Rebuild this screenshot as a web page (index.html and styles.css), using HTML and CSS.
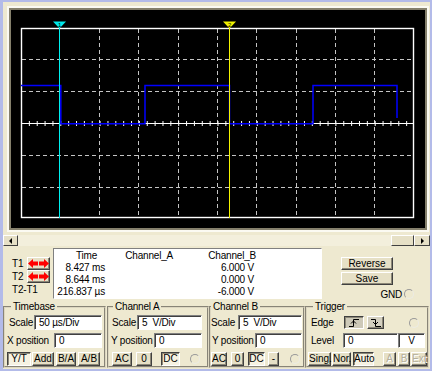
FILE: index.html
```html
<!DOCTYPE html>
<html lang="en">
<head>
  <meta charset="UTF-8">
  <title>Oscilloscope</title>
  <link rel="stylesheet" href="styles.css">
</head>
<body>

<div class="scope">
  <div class="screen">
    <div class="crt">
      <svg width="414" height="218" viewBox="11 10 414 218">
        <g stroke="#c4c4c4" stroke-width="1" stroke-dasharray="4 3">
          <path d="M99.5 29V218M138.5 29V218M178.5 29V218M217.5 29V218M256.5 29V218M296.5 29V218M335.5 29V218M374.5 29V218"/>
          <path d="M22 59.5H414M22 91.5H414M22 155.5H414M22 187.5H414"/>
        </g>
        <path d="M21 123.5H414" stroke="#fff"/>
        <path d="M21 123.5H414" stroke="#fff" stroke-width="5" stroke-dasharray="1 6.86"/>
        <rect x="21.5" y="28.5" width="392" height="189" fill="none" stroke="#fff" stroke-width="1.4"/>
        <polyline points="21,85.5 60.8,85.5 60.8,123.8 145,123.8 145,85.5 229.5,85.5 229.5,123.8 313,123.8 313,85.5 397,85.5 397,118" fill="none" stroke="#0000ff" stroke-width="1.5"/>
        <path d="M59.5 28V218" stroke="#00f0f0"/>
        <polygon points="53,21.5 66,21.5 59.5,28.5" fill="#00e8e8"/>
        <text x="59.5" y="26.6" font-size="6" text-anchor="middle" fill="#000">1</text>
        <path d="M229.5 28V218" stroke="#f4f400"/>
        <polygon points="223,21.5 236,21.5 229.5,28.5" fill="#f0f000"/>
        <text x="229.5" y="26.6" font-size="6" text-anchor="middle" fill="#000">2</text>
      </svg>
    </div>
  </div>

  <div class="scrollbar">
    <div class="sb-btn"><span class="tri-left"></span></div>
    <div class="sb-track"><div class="sb-thumb"></div></div>
    <div class="sb-btn sb-right"><span class="tri-right"></span></div>
  </div>

  <div class="readout">
    <div class="cursors">
      <div class="crow">
        <span class="clabel">T1</span>
        <button class="btn arrows"><svg width="21" height="9" viewBox="0 0 21 9"><polygon points="0,4.5 5,0 5,2.5 10,2.5 10,6.5 5,6.5 5,9" fill="#f00"/><polygon points="21,4.5 16,0 16,2.5 11,2.5 11,6.5 16,6.5 16,9" fill="#f00"/></svg></button>
      </div>
      <div class="crow">
        <span class="clabel">T2</span>
        <button class="btn arrows"><svg width="21" height="9" viewBox="0 0 21 9"><polygon points="0,4.5 5,0 5,2.5 10,2.5 10,6.5 5,6.5 5,9" fill="#f00"/><polygon points="21,4.5 16,0 16,2.5 11,2.5 11,6.5 16,6.5 16,9" fill="#f00"/></svg></button>
      </div>
      <div class="crow">
        <span class="clabel">T2-T1</span>
      </div>
    </div>

    <div class="table">
      <div class="c h1">Time</div>
      <div class="c h2">Channel_A</div>
      <div class="c h3">Channel_B</div>

      <div class="c t">8.427 ms</div>
      <div class="c"></div>
      <div class="c b">6.000 V</div>

      <div class="c t">8.644 ms</div>
      <div class="c"></div>
      <div class="c b">0.000 V</div>

      <div class="c t">216.837 µs</div>
      <div class="c"></div>
      <div class="c b">-6.000 V</div>
    </div>

    <div class="side">
      <button class="btn side-btn">Reverse</button>
      <button class="btn side-btn save">Save</button>
      <div class="gnd">GND <span class="radio"></span></div>
    </div>
  </div>

  <div class="controls">
    <fieldset class="group timebase">
      <legend>Timebase</legend>
      <div class="row">
        <span class="lbl indent">Scale</span>
        <div class="field w68">50 µs/Div</div>
      </div>
      <div class="row">
        <span class="lbl">X position</span>
        <div class="field w48">0</div>
      </div>
      <div class="row">
        <button class="btn on w24">Y/T</button>
        <button class="btn w22 ml1">Add</button>
        <button class="btn w20 ml2">B/A</button>
        <button class="btn w22 ml2">A/B</button>
      </div>
    </fieldset>

    <fieldset class="group cha">
      <legend>Channel A</legend>
      <div class="row">
        <span class="lbl indent1">Scale</span>
        <div class="field w65">5&nbsp;&nbsp;V/Div</div>
      </div>
      <div class="row">
        <span class="lbl">Y position</span>
        <div class="field w48">0</div>
      </div>
      <div class="row">
        <button class="btn w20 ml1">AC</button>
        <button class="btn w16 ml4">0</button>
        <button class="btn on w19 ml9">DC</button>
        <span class="radio ml10"></span>
      </div>
    </fieldset>

    <fieldset class="group chb">
      <legend>Channel B</legend>
      <div class="row">
        <span class="lbl">Scale</span>
        <div class="field w64">5&nbsp;&nbsp;V/Div</div>
      </div>
      <div class="row">
        <span class="lbl indent1">Y position</span>
        <div class="field w47">0</div>
      </div>
      <div class="row">
        <button class="btn w16">AC</button>
        <button class="btn w13 ml4">0</button>
        <button class="btn on w17 ml4">DC</button>
        <button class="btn w11 ml3">-</button>
        <span class="radio ml11"></span>
      </div>
    </fieldset>

    <fieldset class="group trig">
      <legend>Trigger</legend>
      <div class="row">
        <span class="tlbl">Edge</span>
        <button class="btn edge on w20"><svg width="12" height="9" viewBox="0 0 12 9"><path d="M1 8.5H5.5V1.5H11M3 5.5L5.5 3L8 5.5" fill="none" stroke="#000"/></svg></button>
        <button class="btn edge w17 ml3"><svg width="12" height="9" viewBox="0 0 12 9"><path d="M1 1.5H5.5V8.5H11M3 4L5.5 6.5L8 4" fill="none" stroke="#000"/></svg></button>
        <span class="radio trig-radio"></span>
      </div>
      <div class="row">
        <span class="tlbl">Level</span>
        <div class="field w55">0</div>
        <div class="field unit">V</div>
      </div>
      <div class="row">
        <button class="btn w23">Sing.</button>
        <button class="btn w19 ml1">Nor.</button>
        <button class="btn on w21 ml2">Auto</button>
        <button class="btn off w13 ml9">A</button>
        <button class="btn off w12 ml2">B</button>
        <button class="btn off w16 ml1">Ext</button>
      </div>
    </fieldset>
  </div>
</div>

</body>
</html>
```

FILE: styles.css
```css
* {
  box-sizing: border-box;
}

body {
  margin: 0;
  background: #eee9d0;
  font-family: "Liberation Sans", Arial, sans-serif;
  font-size: 10px;
  letter-spacing: -0.2px;
  color: #000;
}

.scope {
  width: 432px;
  height: 371px;
  border: 2px solid #b3bbe9;
  border-left-width: 3px;
  background: #eee9d0;
  display: flex;
  flex-direction: column;
  overflow: hidden;
}

/* scope screen */
.screen {
  margin: 4px 0 0 4px;
  width: 422px;
  height: 226px;
  border: 2px solid #fbfaf2;
}

.crt {
  height: 100%;
  border: 2px solid #85806c;
  background: #000;
}

.crt svg {
  display: block;
  font-family: "Liberation Sans", Arial, sans-serif;
}

/* scrollbar */
.scrollbar {
  display: flex;
  height: 11px;
  margin-top: 3px;
}

.sb-btn {
  width: 15px;
  border: 1px solid;
  border-color: #fff #404040 #404040 #fff;
  background: #e6e0c6;
  display: flex;
  align-items: center;
  justify-content: center;
}

.sb-right {
  width: 16px;
}

.tri-left {
  border-right: 3px solid #000;
  border-top: 3px solid transparent;
  border-bottom: 3px solid transparent;
}

.tri-right {
  border-left: 3px solid #000;
  border-top: 3px solid transparent;
  border-bottom: 3px solid transparent;
}

.sb-track {
  flex: 1;
  display: flex;
  justify-content: flex-end;
  background: #f3efdc;
}

.sb-thumb {
  width: 23px;
  border: 1px solid;
  border-color: #fff #404040 #404040 #fff;
  background: #e6e0c6;
}

/* buttons */
.btn {
  height: 14px;
  padding: 0;
  border: 1px solid;
  border-color: #fff #404040 #404040 #fff;
  box-shadow: inset -1px -1px 0 #8c8878;
  background: #e6e0c6;
  font: inherit;
  color: #000;
  line-height: 11px;
  text-align: center;
  white-space: nowrap;
}

.btn.on {
  border-color: #404040 #fff #fff #404040;
  box-shadow: inset 1px 1px 0 #8c8878;
  background: #f6f2e2;
}

.btn.off {
  color: #b4af9c;
  text-shadow: 1px 1px 0 #fff;
}

/* readout */
.readout {
  display: flex;
  height: 52px;
  margin-top: 2px;
}

.cursors {
  width: 50px;
  padding: 9px 0 0 9px;
}

.crow {
  display: flex;
  align-items: center;
  height: 13px;
}

.clabel {
  width: 15px;
  white-space: nowrap;
}

.arrows {
  width: 23px;
  height: 13px;
  display: flex;
  align-items: center;
  justify-content: center;
}

.arrows svg {
  display: block;
}

.table {
  width: 269px;
  height: 51px;
  padding-top: 1px;
  background: #fff;
  border: 1px solid;
  border-color: #808080 #fff #fff #808080;
  display: grid;
  grid-template-columns: 52px 75px 78px;
  grid-auto-rows: 12px;
  line-height: 12px;
}

.c {
  text-align: right;
  white-space: nowrap;
}

.h1 { padding-right: 9px; }
.h2 { padding-right: 8px; }
.h3 { padding-right: 3px; }
.t { padding-right: 1px; }
.b { padding-right: 5px; }

.side {
  width: 89px;
  margin-left: 19px;
  padding-top: 9px;
  display: flex;
  flex-direction: column;
}

.side-btn {
  width: 52px;
  height: 13px;
}

.save {
  margin-top: 2px;
}

.gnd {
  display: flex;
  align-items: center;
  justify-content: flex-end;
  gap: 2px;
  height: 12px;
  margin-top: 3px;
  padding-right: 16px;
}

.radio {
  width: 10px;
  height: 10px;
  border-radius: 50%;
  border: 1px solid;
  border-color: #9a9a9a #ecebe4 #ecebe4 #9a9a9a;
  flex-shrink: 0;
}

/* control groups */
.controls {
  display: flex;
  height: 67px;
  margin-top: 1px;
}

.group {
  margin: 0;
  padding: 0 2px;
  min-width: 0;
  border: 2px groove #dcd6c0;
}

.group legend {
  padding: 0 2px;
  line-height: 12px;
}

.timebase { width: 103px; margin-right: 1px; }
.timebase legend { margin-left: 4px; }

.cha { width: 102px; padding: 0 5px 0 2px; }
.cha legend { margin-left: 2px; }

.chb { width: 96px; padding: 0 1px 0 0; }
.chb legend { margin-left: 0; }

.trig { width: 124px; padding: 0 0 0 1px; }
.trig legend { margin-left: 5px; }

.row {
  display: flex;
  align-items: center;
  height: 15px;
  margin-top: 2px;
}

.row + .row {
  margin-top: 3px;
}

.lbl {
  flex: 1;
  white-space: nowrap;
}

.indent { padding-left: 2px; }
.indent1 { padding-left: 1px; }

.tlbl {
  width: 35px;
  padding-left: 3px;
}

.field {
  height: 15px;
  padding-left: 4px;
  background: #fff;
  border: 1px solid;
  border-color: #808080 #fff #fff #808080;
  box-shadow: inset 1px 1px 0 #404040;
  line-height: 13px;
  white-space: nowrap;
}

.unit {
  width: 27px;
  padding-left: 0;
  text-align: center;
}

.edge {
  height: 13px;
  margin-left: 1px;
  background: #d4d0c0;
  display: flex;
  align-items: center;
  justify-content: center;
}

.edge.on {
  background: #cdc9b8;
}

.edge svg {
  display: block;
}

.trig-radio {
  margin-left: auto;
  margin-right: 8px;
}

/* widths and spacing */
.w11 { width: 11px; }
.w12 { width: 12px; }
.w13 { width: 13px; }
.w16 { width: 16px; }
.w17 { width: 17px; }
.w19 { width: 19px; }
.w20 { width: 20px; }
.w21 { width: 21px; }
.w22 { width: 22px; }
.w23 { width: 23px; }
.w24 { width: 24px; }
.w47 { width: 47px; }
.w48 { width: 48px; }
.w55 { width: 55px; }
.w64 { width: 64px; }
.w65 { width: 65px; }
.w68 { width: 68px; }

.ml1 { margin-left: 1px; }
.ml2 { margin-left: 2px; }
.ml3 { margin-left: 3px; }
.ml4 { margin-left: 4px; }
.ml9 { margin-left: 9px; }
.ml10 { margin-left: 10px; }
.ml11 { margin-left: 11px; }
```
